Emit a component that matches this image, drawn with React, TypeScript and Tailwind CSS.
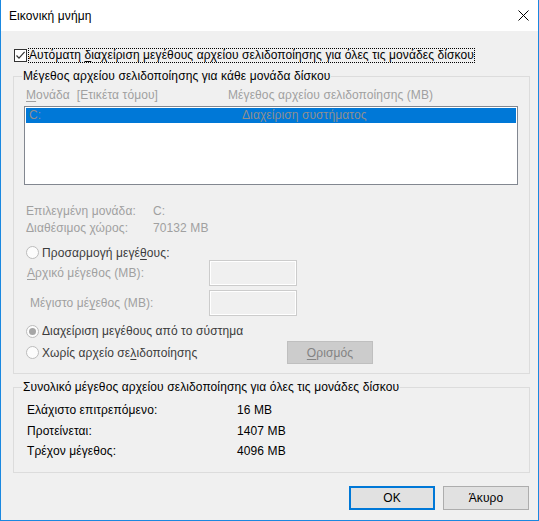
import type { ReactNode } from "react";

const font = { fontFamily: '"Liberation Sans", Arial, sans-serif' };

function U({ children }: { children: ReactNode }) {
  return <span className="underline underline-offset-[2px] decoration-[1px]">{children}</span>;
}

function Radio({ checked = false }: { checked?: boolean }) {
  return (
    <span className="w-[13px] h-[13px] rounded-full border border-[#bcbcbc] bg-[#fcfcfc] flex items-center justify-center shrink-0">
      {checked && <span className="w-[7px] h-[7px] rounded-full bg-[#a6a6a6]" />}
    </span>
  );
}

function DisabledInput() {
  return <div className="w-[88px] h-[26px] border border-[#cccccc] bg-[#f0f0f0] shadow-[inset_0_0_0_1px_#ffffff]" />;
}

function Legend({ children }: { children: ReactNode }) {
  return <legend className="ml-[8px] px-[1px] h-[14px] leading-[14px] text-black">{children}</legend>;
}

export default function App() {
  return (
    <div
      style={font}
      className="w-[539px] h-[521px] flex flex-col bg-white border-x border-b border-[#1a88e0] text-[12px] tracking-[0.1px] text-black select-none"
    >
      {/* title bar */}
      <div className="h-[31px] flex items-center justify-between pl-[8px] pr-[9px] bg-white shrink-0">
        <span className="leading-[14px]">Εικονική μνήμη</span>
        <svg width="11" height="11" viewBox="0 0 11 11" className="shrink-0">
          <path d="M0.5 0.5 L10.5 10.5 M10.5 0.5 L0.5 10.5" stroke="#000" strokeWidth="1" fill="none" />
        </svg>
      </div>

      <div className="flex-1 bg-[#f0f0f0] flex flex-col pt-[17px]">
        {/* auto manage checkbox */}
        <div className="h-[15px] flex items-center pl-[13px]">
          <span className="w-[13px] h-[13px] border border-[#333333] bg-white flex items-center justify-center shrink-0">
            <svg width="11" height="11" viewBox="0 0 11 11">
              <path d="M1.5 5.5 L4 8.2 L9.6 1.8" stroke="#333" strokeWidth="1.2" fill="none" />
            </svg>
          </span>
          <span className="ml-[1px] h-[15px] leading-[15px] px-[1px] outline outline-1 outline-dotted outline-black -outline-offset-1 whitespace-nowrap">
            Αυτόματη <U>δ</U>ιαχείριση μεγέθους αρχείου σελιδοποίησης για όλες τις μονάδες δίσκου
          </span>
        </div>

        {/* per-drive group */}
        <fieldset className="mt-[6px] ml-[12px] w-[517px] border border-[#dcdcdc] pb-[9px]">
          <Legend>Μέγεθος αρχείου σελιδοποίησης για κάθε μονάδα δίσκου</Legend>

          <div className="mt-[5px] h-[14px] leading-[14px] flex pl-[12px] text-[#a0a0a0]">
            <span className="w-[202px] whitespace-nowrap">
              <U>Μ</U>ονάδα&nbsp; [Ετικέτα τόμου]
            </span>
            <span className="whitespace-nowrap">Μέγεθος αρχείου σελιδοποίησης (MB)</span>
          </div>

          <div className="mt-[4px] ml-[10px] w-[494px] h-[79px] border border-[#828790] bg-white p-[1px]">
            <div className="h-[15px] leading-[15px] bg-[#0078d7] flex pl-[3px] text-[#8f8f8f]">
              <span className="w-[213px]">C:</span>
              <span className="whitespace-nowrap">Διαχείριση συστήματος</span>
            </div>
          </div>

          <div className="mt-[18px] pl-[12px] text-[#a0a0a0] leading-[17px]">
            <div className="flex">
              <span className="w-[127px]">Επιλεγμένη μονάδα:</span>
              <span>C:</span>
            </div>
            <div className="flex">
              <span className="w-[127px]">Διαθέσιμος χώρος:</span>
              <span>70132 MB</span>
            </div>
          </div>

          <div className="mt-[8px] h-[15px] flex items-center pl-[12px] gap-[3px] text-[#3c3c3c]">
            <Radio />
            <span className="leading-[14px] whitespace-nowrap">
              Προσαρμογή μεγέ<U>θ</U>ους:
            </span>
          </div>

          <div className="h-[26px] flex items-center pl-[13px] text-[#a0a0a0]">
            <span className="w-[182px] whitespace-nowrap">
              <U>Α</U>ρχικό μέγεθος (MB):
            </span>
            <DisabledInput />
          </div>

          <div className="mt-[4px] h-[26px] flex items-center pl-[16px] text-[#a0a0a0]">
            <span className="w-[179px] whitespace-nowrap">
              Μέγιστο μέ<U>γ</U>εθος (MB):
            </span>
            <DisabledInput />
          </div>

          <div className="mt-[8px] h-[14px] flex items-center pl-[12px] gap-[3px] text-[#3c3c3c]">
            <Radio checked />
            <span className="leading-[14px] whitespace-nowrap">Διαχείριση μεγέθους από το σύστημα</span>
          </div>

          <div className="mt-[3px] h-[23px] flex items-center pl-[12px] text-[#3c3c3c]">
            <div className="w-[261px] flex items-center gap-[3px]">
              <Radio />
              <span className="leading-[14px] whitespace-nowrap">
                Χωρίς αρχείο σε<U>λ</U>ιδοποίησης
              </span>
            </div>
            <div className="w-[86px] h-[23px] border border-[#bfbfbf] bg-[#cccccc] text-[#838383] flex items-center justify-center">
              <span>
                <U>Ο</U>ρισμός
              </span>
            </div>
          </div>
        </fieldset>

        {/* totals group */}
        <fieldset className="mt-[6px] ml-[12px] w-[517px] border border-[#dcdcdc] pb-[11px]">
          <Legend>Συνολικό μέγεθος αρχείου σελιδοποίησης για όλες τις μονάδες δίσκου</Legend>
          <div className="mt-[6px] pl-[13px]">
            <div className="h-[20px] flex items-center">
              <span className="w-[210px]">Ελάχιστο επιτρεπόμενο:</span>
              <span>16 MB</span>
            </div>
            <div className="h-[21px] flex items-center">
              <span className="w-[210px]">Προτείνεται:</span>
              <span>1407 MB</span>
            </div>
            <div className="h-[20px] flex items-center">
              <span className="w-[210px]">Τρέχον μέγεθος:</span>
              <span>4096 MB</span>
            </div>
          </div>
        </fieldset>

        {/* dialog buttons */}
        <div className="mt-[13px] flex justify-end gap-[8px] pr-[9px]">
          <button className="w-[86px] h-[24px] border-2 border-[#0078d7] bg-[#e1e1e1] text-black">OK</button>
          <button className="w-[86px] h-[24px] border border-[#adadad] bg-[#e1e1e1] text-black">Άκυρο</button>
        </div>
      </div>
    </div>
  );
}
